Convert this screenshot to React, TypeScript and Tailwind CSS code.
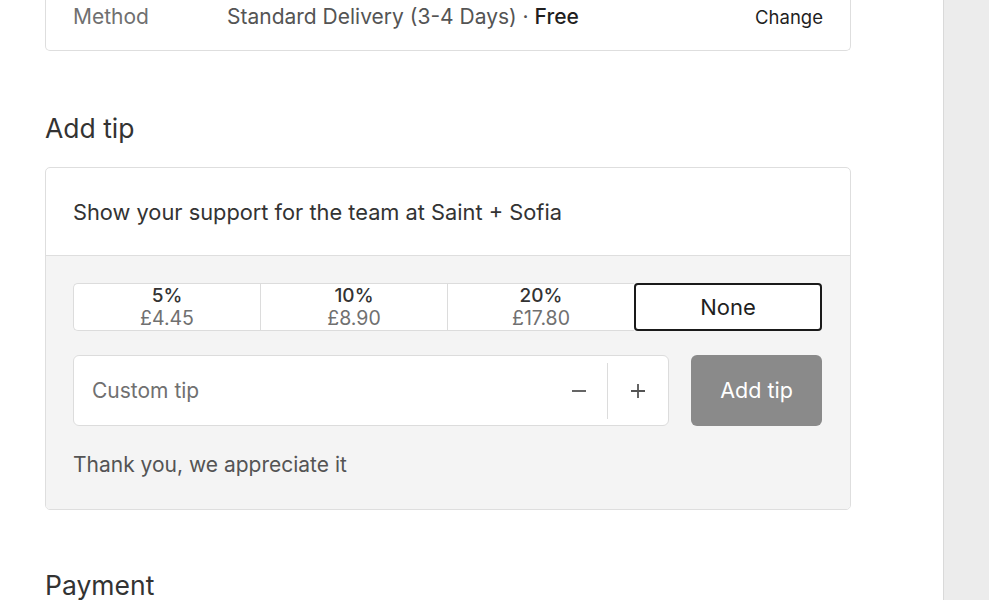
export default function App() {
  const tips = [
    { pct: "5%", amount: "£4.45" },
    { pct: "10%", amount: "£8.90" },
    { pct: "20%", amount: "£17.80" },
  ];

  return (
    <div
      className="flex h-[600px] w-[989px] overflow-hidden bg-white text-[#333333]"
      style={{ fontFamily: "Inter, 'Noto Sans', sans-serif" }}
    >
      <main className="w-[943px] shrink-0 pl-[45px]">
        {/* shipping method card, top cut off */}
        <div className="w-[806px] rounded-b-[5px] border-x border-b border-[#dedede] px-[27px] pb-[17px]">
          <div className="flex h-[33px] items-center text-[21px] leading-[28px]">
            <span className="w-[154px] text-[#707070]">Method</span>
            <span className="text-[#545454]">
              Standard Delivery (3-4 Days) · <span className="font-medium text-[#1f1f1f]">Free</span>
            </span>
            <button className="ml-auto text-[18.5px] text-[#1f1f1f]">Change</button>
          </div>
        </div>

        <h2 className="mt-[60px] text-[26.5px] leading-[34px] text-[#333333]">Add tip</h2>

        <section className="mt-[22px] w-[806px] overflow-hidden rounded-[5px] border border-[#dedede]">
          <div className="flex h-[88px] items-center border-b border-[#dedede] px-[27px] text-[21.8px] leading-[28px] text-[#333333]">
            Show your support for the team at Saint + Sofia
          </div>

          <div className="bg-[#f4f4f4] px-[27px] pb-[30px] pt-[27px]">
            <div className="flex h-[48px]">
              {tips.map((t, i) => (
                <button
                  key={t.pct}
                  className={
                    "flex w-[187px] flex-col items-center justify-center border-y border-l border-[#dcdcdc] bg-white leading-[22px]" +
                    (i === 0 ? " rounded-l-[5px]" : "")
                  }
                >
                  <span className="text-[19px] font-medium text-[#333333]">{t.pct}</span>
                  <span className="text-[19.5px] text-[#707070]">{t.amount}</span>
                </button>
              ))}
              <button className="flex w-[188px] items-center justify-center rounded-[4px] border-2 border-[#1a1a1a] bg-white text-[22px] text-[#1f1f1f]">
                None
              </button>
            </div>

            <div className="mt-[24px] flex gap-[22px]">
              <div className="flex h-[71px] w-[596px] items-center rounded-[6px] border border-[#dcdcdc] bg-white">
                <span className="flex-1 pl-[18px] text-[21px] text-[#707070]">Custom tip</span>
                <button className="flex w-[56px] items-center justify-center">
                  <svg width="16" height="16" viewBox="0 0 16 16">
                    <path d="M1 8h14" stroke="#545454" strokeWidth="1.8" />
                  </svg>
                </button>
                <div className="h-[56px] w-px bg-[#dcdcdc]" />
                <button className="flex w-[60px] items-center justify-center">
                  <svg width="16" height="16" viewBox="0 0 16 16">
                    <path d="M1 8h14M8 1v14" stroke="#545454" strokeWidth="1.8" />
                  </svg>
                </button>
              </div>
              <button className="h-[71px] w-[131px] rounded-[6px] bg-[#8a8a8a] text-[21.5px] text-white">
                Add tip
              </button>
            </div>

            <p className="mt-[25px] text-[21px] leading-[28px] text-[#545454]">Thank you, we appreciate it</p>
          </div>
        </section>

        <h2 className="mt-[58px] text-[26.5px] leading-[34px] text-[#333333]">Payment</h2>
      </main>
      <aside className="flex-1 border-l border-[#d9d9d9] bg-[#ececec]" />
    </div>
  );
}
